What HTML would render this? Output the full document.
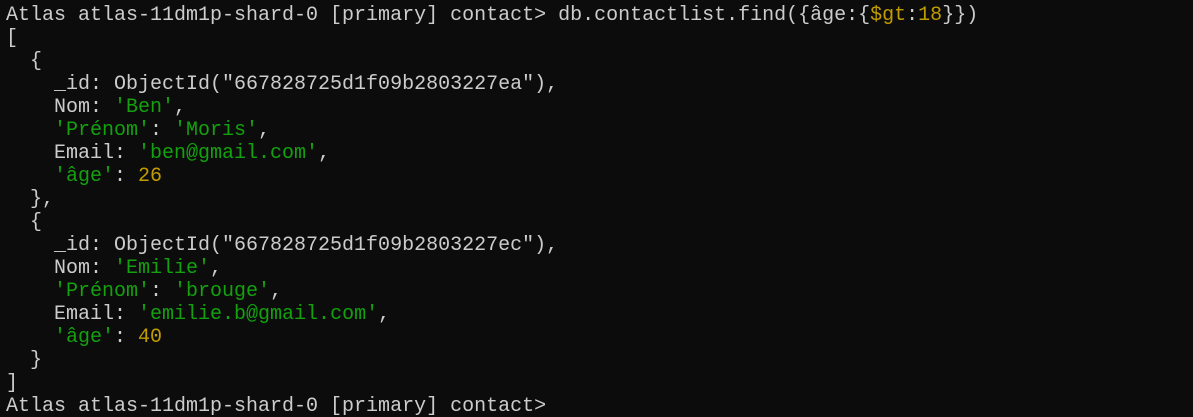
<!DOCTYPE html>
<html><head><meta charset="utf-8"><style>
html,body{margin:0;padding:0;background:#0c0c0c;width:1193px;height:417px;overflow:hidden;position:relative}
.l{position:absolute;left:6px;height:22px;line-height:22px;font-family:"Liberation Mono",monospace;font-size:20px;color:#cccccc;white-space:pre}
.g{color:#13a10e}.y{color:#c19c00}
</style></head><body>
<div class="l" style="top:5px">Atlas atlas-11dm1p-shard-0 [primary] contact&gt; db.contactlist.find({âge:{<span class="y">$gt</span>:<span class="y">18</span>}})</div>
<div class="l" style="top:28px">[</div>
<div class="l" style="top:51px">  {</div>
<div class="l" style="top:74px">    _id: ObjectId("667828725d1f09b2803227ea"),</div>
<div class="l" style="top:97px">    Nom: <span class="g">'Ben'</span>,</div>
<div class="l" style="top:120px">    <span class="g">'Prénom'</span>: <span class="g">'Moris'</span>,</div>
<div class="l" style="top:143px">    Email: <span class="g">'ben@gmail.com'</span>,</div>
<div class="l" style="top:166px">    <span class="g">'âge'</span>: <span class="y">26</span></div>
<div class="l" style="top:189px">  },</div>
<div class="l" style="top:212px">  {</div>
<div class="l" style="top:235px">    _id: ObjectId("667828725d1f09b2803227ec"),</div>
<div class="l" style="top:258px">    Nom: <span class="g">'Emilie'</span>,</div>
<div class="l" style="top:281px">    <span class="g">'Prénom'</span>: <span class="g">'brouge'</span>,</div>
<div class="l" style="top:304px">    Email: <span class="g">'emilie.b@gmail.com'</span>,</div>
<div class="l" style="top:327px">    <span class="g">'âge'</span>: <span class="y">40</span></div>
<div class="l" style="top:350px">  }</div>
<div class="l" style="top:373px">]</div>
<div class="l" style="top:396px">Atlas atlas-11dm1p-shard-0 [primary] contact&gt;</div>
</body></html>
